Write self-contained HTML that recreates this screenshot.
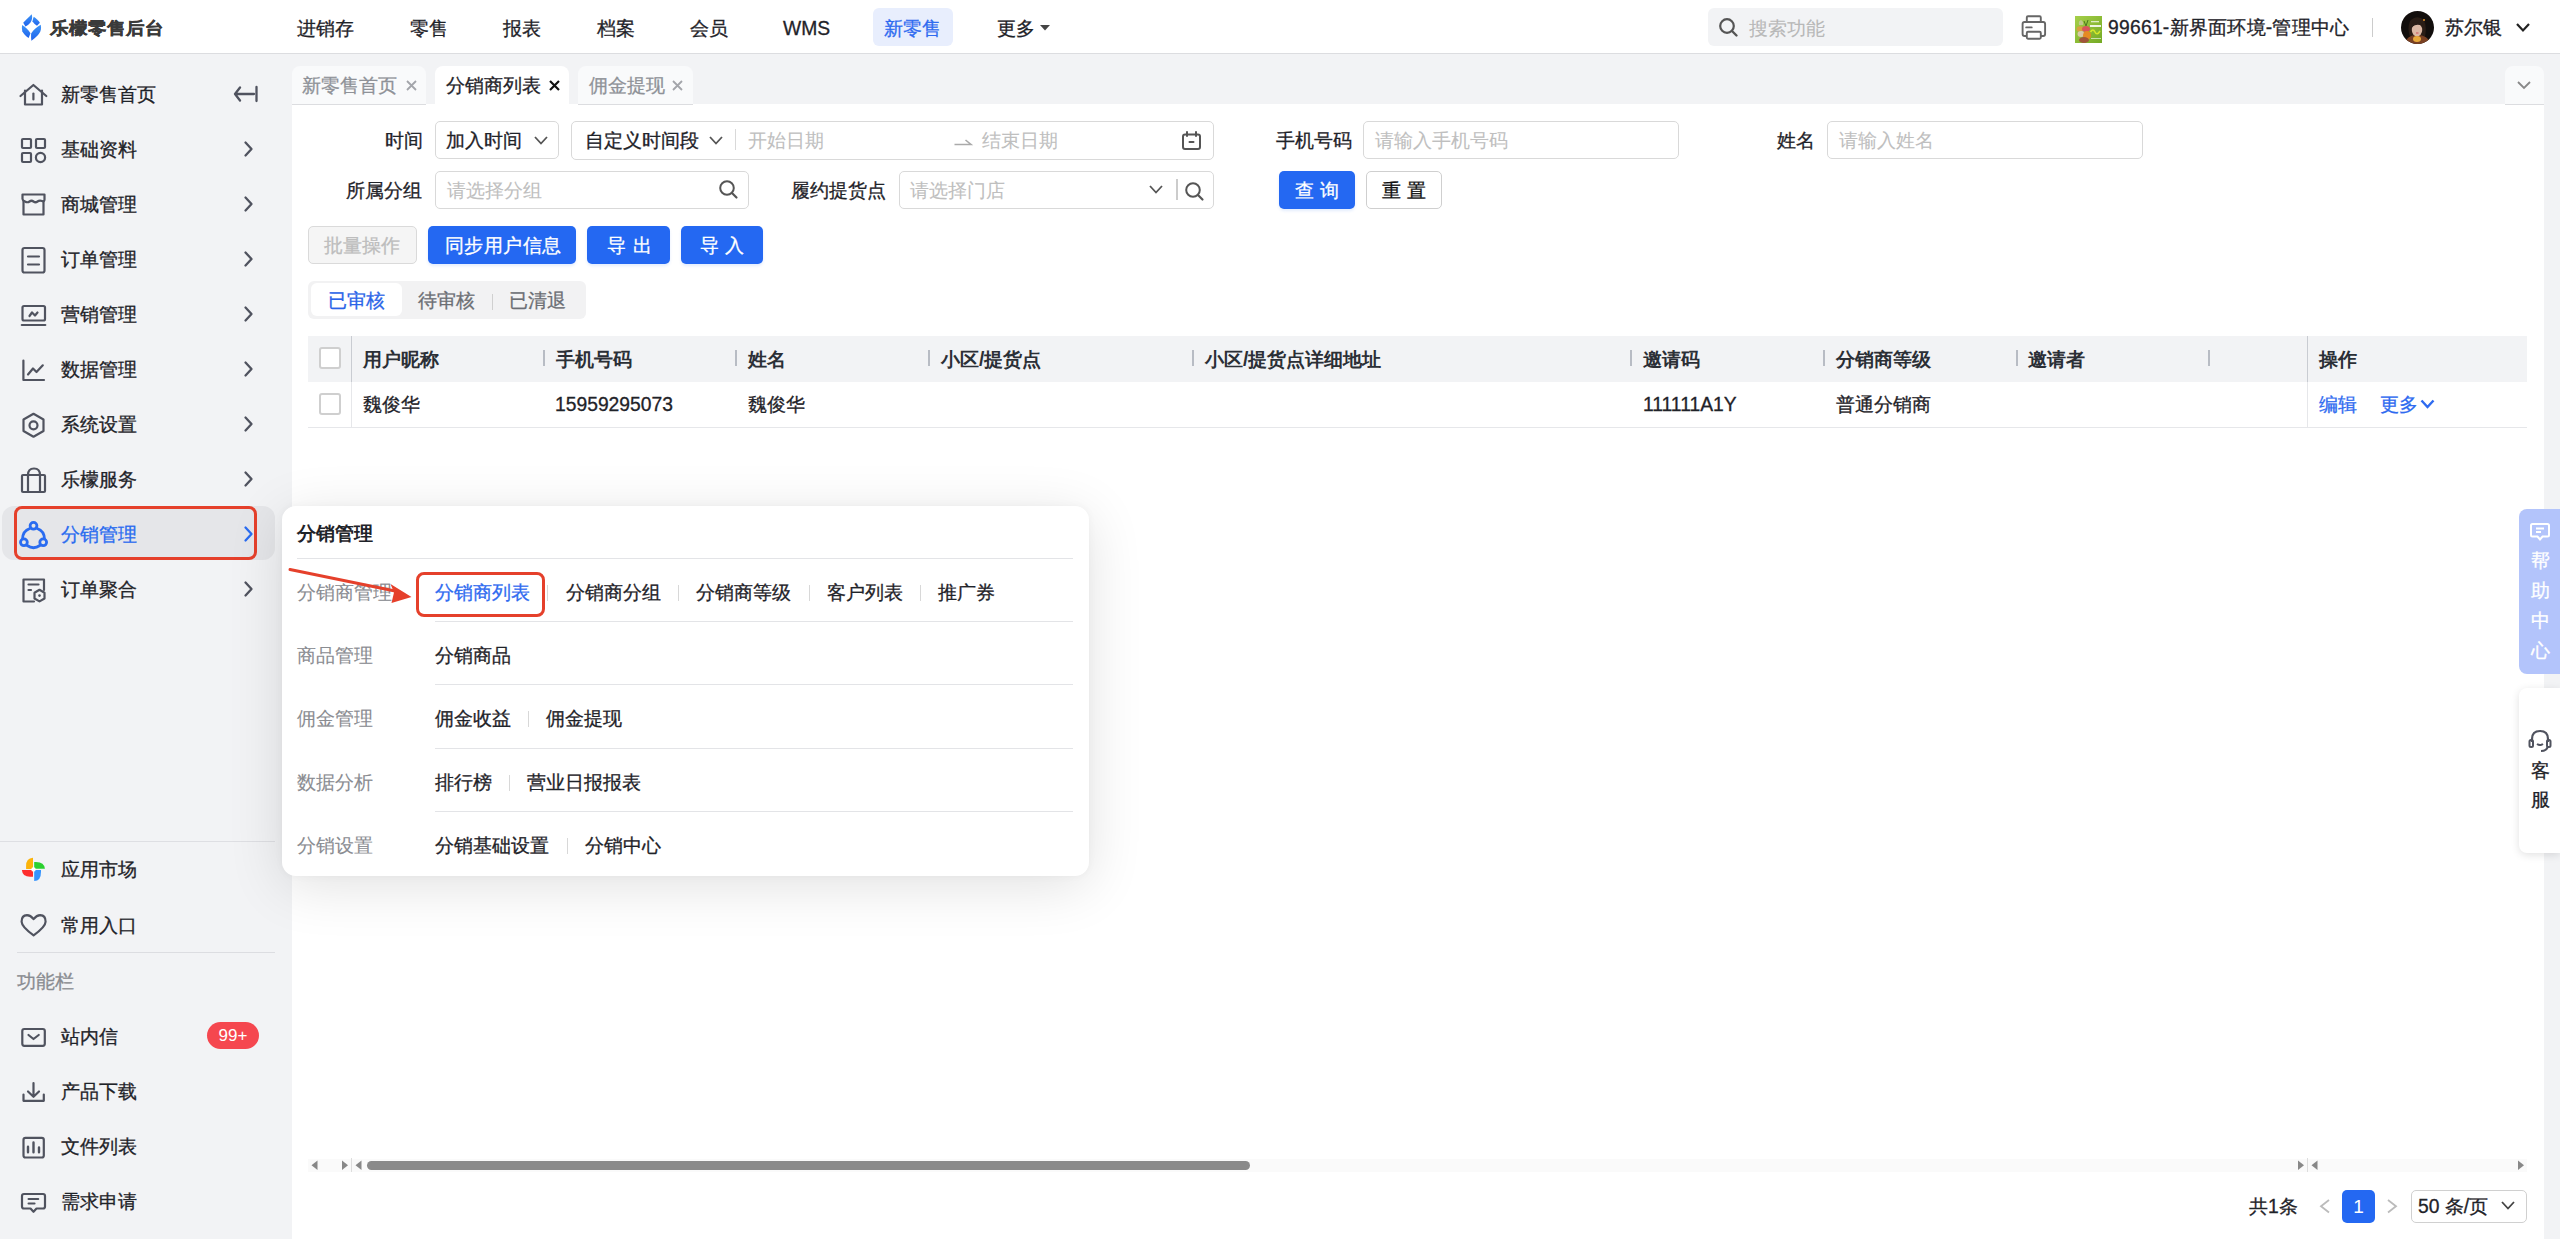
<!DOCTYPE html>
<html><head><meta charset="utf-8">
<style>
*{box-sizing:border-box;margin:0;padding:0}
html,body{width:2560px;height:1239px;overflow:hidden;background:#f2f3f5;font-family:"Liberation Sans",sans-serif;color:#1f2329}
.a{position:absolute}
.t{position:absolute;font-size:19.3px;line-height:30px;white-space:nowrap;-webkit-text-stroke-width:0.3px}
svg{position:absolute;overflow:visible}
#hdr{left:0;top:0;width:2560px;height:54px;background:#fff;border-bottom:1px solid #dcdde0}
#side{left:0;top:55px;width:292px;height:1184px;background:#f2f3f5}
#panel{left:292px;top:104px;width:2252px;height:1135px;background:#fff}
.ph{color:#bfbfbf;-webkit-text-stroke-width:0.1px}
.box{position:absolute;border:1px solid #d9d9d9;border-radius:5px;background:#fff}
.btnb{position:absolute;background:#2468f2;border-radius:5px;color:#fff;box-shadow:0 2px 3px rgba(36,104,242,0.12)}
.si{color:#1f2329}
.gray{color:#888;-webkit-text-stroke-width:0.1px}
</style></head><body>

<!-- HEADER -->
<div id="hdr" class="a">
  <svg style="left:15px;top:10px" width="35" height="35" viewBox="0 0 35 35">
    <defs><linearGradient id="lg" x1="0" y1="0" x2="0" y2="1"><stop offset="0" stop-color="#3d94f6"/><stop offset="1" stop-color="#1f63ed"/></linearGradient></defs>
    <path d="M16.7 4.2C17.6 7 17.2 10 15.5 12.5C14 14.5 12 15.8 10.5 16.4L8.2 12.7C10 10.5 14 7 16.7 4.2Z" fill="url(#lg)"/>
    <path d="M18.8 6.8C21 8.5 23.5 10.5 24.9 12.7L22 15.8C20 14.5 18.5 13 17.5 11.3C17.8 9.5 18.2 8 18.8 6.8Z" fill="url(#lg)"/>
    <path d="M7.1 15C10 17 13.5 19.5 15.5 23.2L13.6 28C10.5 26 8.5 23.5 7.3 21.2C6.8 19 6.8 17 7.1 15Z" fill="url(#lg)"/>
    <path d="M25.7 14.7C26.5 18 26 21 24 23.8C22 26.5 19 29 16.4 30.8C16 28 16 25.5 16.1 23.4C18.5 19.5 22 17 25.7 14.7Z" fill="url(#lg)"/>
  </svg>
  <div class="t" style="left:50px;top:13px;font-size:19px;font-weight:bold;color:#3a3a3a;letter-spacing:0px;-webkit-text-stroke-width:0.4px;transform:scaleY(0.92);transform-origin:0 50%">乐檬零售后台</div>

  <div class="t" style="left:297px;top:14px">进销存</div>
  <div class="t" style="left:410px;top:14px">零售</div>
  <div class="t" style="left:503px;top:14px">报表</div>
  <div class="t" style="left:597px;top:14px">档案</div>
  <div class="t" style="left:690px;top:14px">会员</div>
  <div class="t" style="left:783px;top:14px">WMS</div>
  <div class="a" style="left:873px;top:8px;width:80px;height:38px;background:#e8eefd;border-radius:6px"></div>
  <div class="t" style="left:884px;top:14px;color:#2f6bf0">新零售</div>
  <div class="t" style="left:997px;top:14px">更多</div>
  <svg style="left:1040px;top:25px" width="10" height="6" viewBox="0 0 10 6"><path d="M0 0H10L5 5.5Z" fill="#444"/></svg>

  <div class="a" style="left:1708px;top:8px;width:295px;height:38px;background:#f2f3f5;border-radius:6px"></div>
  <svg style="left:1719px;top:18px" width="19" height="19" viewBox="0 0 19 19"><circle cx="8" cy="8" r="6.8" fill="none" stroke="#555" stroke-width="2.2"/><path d="M13 13L17.5 17.5" stroke="#555" stroke-width="2.4" stroke-linecap="round"/></svg>
  <div class="t ph" style="left:1749px;top:14px;color:#b8b8b8">搜索功能</div>

  <svg style="left:2015px;top:10px" width="40" height="35" viewBox="0 0 40 35">
    <g fill="none" stroke="#666" stroke-width="1.9" stroke-linejoin="round">
    <path d="M11.8 12V7.5Q11.8 6.3 13 6.3H24.6Q25.8 6.3 25.8 7.5V12"/>
    <path d="M11.8 26H9.5Q7.6 26 7.6 24V14Q7.6 12 9.5 12H28.2Q30.1 12 30.1 14V24Q30.1 26 28.2 26H25.8"/>
    <path d="M13 21.8H24.6Q25.8 21.8 25.8 23V27.6Q25.8 28.8 24.6 28.8H13Q11.8 28.8 11.8 27.6V23Q11.8 21.8 13 21.8Z"/>
    <path d="M11.2 17.4H16.7" stroke-linecap="round"/>
    </g>
  </svg>
  <svg style="left:2075px;top:16px" width="27" height="27" viewBox="0 0 27 27">
    <defs><linearGradient id="sg" x1="0" y1="0" x2="1" y2="1"><stop offset="0" stop-color="#a6cf4a"/><stop offset="1" stop-color="#74aa24"/></linearGradient></defs>
    <rect width="27" height="27" fill="url(#sg)"/>
    <path d="M4 9Q3 5 6 4Q9 6 8 9Z" fill="#c9c9a0" opacity=".8"/>
    <path d="M9 5L11 10L13 4" fill="none" stroke="#4a7a20" stroke-width="1"/>
    <ellipse cx="5" cy="13" rx="3.5" ry="2.8" fill="#d9a040"/>
    <ellipse cx="11" cy="13" rx="4" ry="3" fill="#d8555a"/>
    <ellipse cx="6" cy="18" rx="3.5" ry="3" fill="#d8c9a8"/>
    <ellipse cx="12" cy="19.5" rx="4" ry="4.5" fill="#e58a22"/>
    <ellipse cx="9" cy="24" rx="5" ry="3" fill="#a0553a"/>
    <rect x="15" y="9" width="11" height="2" fill="#fff" opacity=".85"/>
    <rect x="16" y="5" width="8" height="1.3" fill="#fff" opacity=".7"/>
    <path d="M15.5 16Q18 12 20 16T25 15" fill="none" stroke="#d6e62a" stroke-width="1.6"/>
    <rect x="16" y="22" width="10" height="1" fill="#fff" opacity=".6"/>
  </svg>
  <div class="t" style="left:2108px;top:13px;color:#1f2329;letter-spacing:0.25px">99661-新界面环境-管理中心</div>
  <div class="a" style="left:2372px;top:18px;width:1px;height:19px;background:#ccc"></div>
  <svg style="left:2401px;top:11px" width="33" height="33" viewBox="0 0 33 33">
    <defs><clipPath id="avc"><circle cx="16.5" cy="16.5" r="16.5"/></clipPath></defs>
    <g clip-path="url(#avc)">
    <rect width="33" height="33" fill="#120e0c"/>
    <path d="M9 10Q16 3 23 9Q26 16 24 26L9 26Q6 17 9 10Z" fill="#2a1d16"/>
    <path d="M3 33Q6 24 16 24Q27 24 30 33Z" fill="#7a4022"/>
    <ellipse cx="16" cy="19" rx="5.2" ry="6.5" fill="#dcb8a4"/>
    <path d="M11 13Q16 9 22 13L21 15Q16 12 11 16Z" fill="#2a1d16"/>
    <ellipse cx="16" cy="28" rx="4" ry="3" fill="#e8a83a"/>
    <circle cx="23" cy="9" r="1" fill="#e0902a"/>
    <rect x="15" y="21.5" width="2.5" height="1" fill="#d0505a"/>
    </g>
  </svg>
  <div class="t" style="left:2445px;top:13px">苏尔银</div>
  <svg style="left:2516px;top:23px" width="14" height="9" viewBox="0 0 14 9"><path d="M1 1L7 7.5L13 1" fill="none" stroke="#222" stroke-width="2.2"/></svg>
</div>

<!-- SIDEBAR -->
<div id="side" class="a"></div>
<!-- sidebar items -->
<svg style="left:0;top:0" width="292" height="1239" viewBox="0 0 292 1239">
 <g fill="none" stroke="#50535f" stroke-width="2.2" stroke-linecap="round" stroke-linejoin="round">
  <!-- home -->
  <path d="M20.5 96L33.4 85L46.3 96"/>
  <path d="M25 90.5V104.5H42V90.5"/>
  <path d="M33.4 93.5V99.5"/>
  <!-- grid -->
  <rect x="22" y="139" width="9" height="9" rx="1"/>
  <rect x="36" y="139" width="9" height="9" rx="1"/>
  <rect x="22" y="153" width="9" height="9" rx="1"/>
  <circle cx="40.5" cy="157.5" r="4.6"/>
  <!-- store -->
  <path d="M23.5 201V214.5H43.5V201"/>
  <path d="M22.5 194.5H44.5V199.5Q44.5 202 42 201Q39.5 200 37.5 201.5Q35.5 203 33.5 201.5Q31.5 200 29.5 201.5Q27.5 203 25 201.5Q22.5 200.5 22.5 199Z"/>
  <!-- doc -->
  <rect x="22.5" y="248" width="22" height="24.5" rx="2"/>
  <path d="M28 256.5H39M28 264.5H39"/>
  <!-- monitor -->
  <rect x="22.5" y="306" width="22.5" height="14.5" rx="1.5"/>
  <path d="M21.8 325H45.3"/>
  <path d="M29.5 316L32 312.5L35 315.5L37.5 312.5" stroke-width="2.2"/>
  <!-- chart -->
  <path d="M23.4 360.5V380H44"/>
  <path d="M28 374.5L33 368.5L36.5 372L42.8 365.3"/>
  <!-- hex -->
  <path d="M33.5 413.8L43.5 419.5V431L33.5 436.7L23.5 431V419.5Z"/>
  <circle cx="33.5" cy="425.3" r="4"/>
  <!-- briefcase -->
  <rect x="22" y="475" width="23" height="17" rx="1"/>
  <path d="M28 475V492M40 475V492"/>
  <path d="M28 475Q28 468.5 34 468.5Q40 468.5 40 475"/>
 </g>
</svg>
<div class="a" style="left:2px;top:506px;width:273px;height:54px;background:#e5e6e9;border-radius:12px"></div>
<svg style="left:0;top:0" width="292" height="1239" viewBox="0 0 292 1239">
 <g fill="none" stroke="#50535f" stroke-width="2.2" stroke-linecap="round" stroke-linejoin="round">
  <!-- doc gear -->
  <path d="M34 601.5H23.5V579.5H44V590"/>
  <path d="M28.5 584.5H38.5M28.5 590H31"/>
  <path d="M39.5 589.8L44.5 592.7V598.5L39.5 601.4L34.5 598.5V592.7Z"/>
  <circle cx="39.5" cy="595.6" r="1.3" fill="#50535f" stroke="none"/>
 </g>
 <g fill="none" stroke="#2a6cf0" stroke-width="2.8" stroke-linecap="round">
  <path d="M29.8 528.5A11 11 0 0 0 22.6 538.6"/>
  <path d="M37.2 528.5A11 11 0 0 1 44.4 538.6"/>
  <path d="M27.2 545.5A11 11 0 0 0 39.8 545.5"/>
  <circle cx="33.5" cy="525.8" r="3.4"/>
  <circle cx="23.9" cy="542.3" r="3.4"/>
  <circle cx="43.2" cy="542.3" r="3.4"/>
 </g>
 <!-- chevrons -->
 <g fill="none" stroke="#50535f" stroke-width="2.3" stroke-linecap="round" stroke-linejoin="round">
  <path d="M240 87.5L235 94L240 100.5M236 94H254M256.5 87V101"/>
  <path d="M245.5 142.5L251.5 149L245.5 155.5"/>
  <path d="M245.5 197.5L251.5 204L245.5 210.5"/>
  <path d="M245.5 252.5L251.5 259L245.5 265.5"/>
  <path d="M245.5 307.5L251.5 314L245.5 320.5"/>
  <path d="M245.5 362.5L251.5 369L245.5 375.5"/>
  <path d="M245.5 417.5L251.5 424L245.5 430.5"/>
  <path d="M245.5 472.5L251.5 479L245.5 485.5"/>
  <path d="M245.5 582.5L251.5 589L245.5 595.5"/>
 </g>
 <path d="M245.5 527.5L251.5 534L245.5 540.5" fill="none" stroke="#2a6cf0" stroke-width="2.3" stroke-linecap="round" stroke-linejoin="round"/>
</svg>
<div class="t si" style="left:61px;top:80px">新零售首页</div>
<div class="t si" style="left:61px;top:135px">基础资料</div>
<div class="t si" style="left:61px;top:190px">商城管理</div>
<div class="t si" style="left:61px;top:245px">订单管理</div>
<div class="t si" style="left:61px;top:300px">营销管理</div>
<div class="t si" style="left:61px;top:355px">数据管理</div>
<div class="t si" style="left:61px;top:410px">系统设置</div>
<div class="t si" style="left:61px;top:465px">乐檬服务</div>
<div class="t" style="left:61px;top:520px;color:#2a6cf0">分销管理</div>
<div class="t si" style="left:61px;top:575px">订单聚合</div>
<div class="a" style="left:13.5px;top:506px;width:243px;height:54px;border:3.5px solid #e5402b;border-radius:8px"></div>

<!-- sidebar bottom -->
<div class="a" style="left:0;top:841px;width:275px;height:1px;background:#dedfe3"></div>
<svg style="left:0;top:840px" width="60" height="400" viewBox="0 840 60 400">
  <path d="M33 869V857.7Q26 858 26.1 866V869Z" fill="#fbb30a"/>
  <path d="M34.2 868.8H44.9Q44.5 862 36 861.9H34.2Z" fill="#2bd02f"/>
  <path d="M33 870H21.9Q22.5 876.8 30 876.8H33Z" fill="#fe2e2e"/>
  <path d="M34.2 870V881Q41 881 41 872V870Z" fill="#3593fd"/>
  <circle cx="33.5" cy="869.4" r="2.2" fill="#fff"/>
  <g fill="none" stroke="#50535f" stroke-width="2.2" stroke-linecap="round" stroke-linejoin="round">
  <path d="M33.6 919.2Q30.5 915.2 27 915.2Q21.5 915.5 21.6 921.8Q21.8 927 33.6 935.3Q45.4 927 45.6 921.8Q45.7 915.5 40.2 915.2Q36.7 915.2 33.6 919.2Z"/>
  <rect x="22.3" y="1029" width="22.5" height="16.8" rx="2"/>
  <path d="M28.5 1035L33.5 1039L38.7 1035"/>
  <path d="M33.5 1083V1096.5M28 1091.5L33.5 1096.8L39 1091.5"/>
  <path d="M23.5 1094.5V1100.8H43.8V1094.5"/>
  <rect x="23.5" y="1137.8" width="20.3" height="19.7" rx="2"/>
  <path d="M28 1146.8V1152.2M33.5 1142.5V1152.2M39 1147.5V1152.2" stroke-width="2.4"/>
  <path d="M24 1194H43Q45 1194 45 1196V1206.5Q45 1208.5 43 1208.5H36.5L33.5 1211.8L30.5 1208.5H24Q22 1208.5 22 1206.5V1196Q22 1194 24 1194Z"/>
  <path d="M28.6 1199H38.2M28.6 1203.5H34.5"/>
  </g>
</svg>
<div class="t si" style="left:61px;top:855px">应用市场</div>
<div class="t si" style="left:61px;top:911px">常用入口</div>
<div class="a" style="left:17px;top:952px;width:258px;height:1px;background:#dcdde1"></div>
<div class="t" style="left:17px;top:967px;color:#8a8c91">功能栏</div>
<div class="t si" style="left:61px;top:1022px">站内信</div>
<div class="a" style="left:207px;top:1022px;width:52px;height:27px;border-radius:14px;background:#f5474f;color:#fff;font-size:17px;line-height:27px;text-align:center">99+</div>
<div class="t si" style="left:61px;top:1077px">产品下载</div>
<div class="t si" style="left:61px;top:1132px">文件列表</div>
<div class="t si" style="left:61px;top:1187px">需求申请</div>


<!-- PANEL -->
<div id="panel" class="a"></div>
<!-- page tabs -->
<div class="a" style="left:292px;top:66px;width:134px;height:39px;background:#f9fafb;border-radius:8px 8px 0 0;border-bottom:1px solid #dcdde0"></div>
<div class="t" style="left:302px;top:71px;color:#8f9298">新零售首页</div>
<svg style="left:406px;top:80px" width="11" height="11" viewBox="0 0 11 11"><path d="M1 1L10 10M10 1L1 10" stroke="#a3a5aa" stroke-width="1.8"/></svg>
<div class="a" style="left:435px;top:66px;width:134px;height:40px;background:#fff;border-radius:8px 8px 0 0"></div>
<div class="t" style="left:446px;top:71px;color:#1f2329">分销商列表</div>
<svg style="left:549px;top:80px" width="11" height="11" viewBox="0 0 11 11"><path d="M1 1L10 10M10 1L1 10" stroke="#111" stroke-width="2.2"/></svg>
<div class="a" style="left:578px;top:66px;width:115px;height:39px;background:#f9fafb;border-radius:8px 8px 0 0;border-bottom:1px solid #dcdde0"></div>
<div class="t" style="left:589px;top:71px;color:#8f9298">佣金提现</div>
<svg style="left:672px;top:80px" width="11" height="11" viewBox="0 0 11 11"><path d="M1 1L10 10M10 1L1 10" stroke="#a3a5aa" stroke-width="1.8"/></svg>
<div class="a" style="left:2505px;top:66px;width:39px;height:39px;background:#f9fafb;border-radius:8px 8px 0 0;border-bottom:1px solid #dcdde0"></div>
<svg style="left:2517px;top:81px" width="14" height="8" viewBox="0 0 14 8"><path d="M1 1L7 7L13 1" fill="none" stroke="#888" stroke-width="1.8"/></svg>

<!-- filters row 1 -->
<div class="t" style="left:385px;top:126px">时间</div>
<div class="box" style="left:435px;top:121px;width:124px;height:38px"></div>
<div class="t" style="left:446px;top:126px">加入时间</div>
<svg style="left:534px;top:136px" width="14" height="9" viewBox="0 0 14 9"><path d="M1 1L7 7.5L13 1" fill="none" stroke="#555" stroke-width="1.8"/></svg>
<div class="box" style="left:571px;top:121px;width:643px;height:39px"></div>
<div class="t" style="left:585px;top:126px">自定义时间段</div>
<svg style="left:709px;top:136px" width="14" height="9" viewBox="0 0 14 9"><path d="M1 1L7 7.5L13 1" fill="none" stroke="#555" stroke-width="1.8"/></svg>
<div class="a" style="left:735px;top:129px;width:1px;height:21px;background:#d9d9d9"></div>
<div class="t ph" style="left:748px;top:126px">开始日期</div>
<svg style="left:954px;top:138px" width="18" height="8" viewBox="0 0 18 8"><path d="M0.5 6.5H17L11.5 2" fill="none" stroke="#aaa" stroke-width="1.6"/></svg>
<div class="t ph" style="left:982px;top:126px">结束日期</div>
<svg style="left:1182px;top:131px" width="19" height="19" viewBox="0 0 19 19"><rect x="1" y="3.5" width="17" height="14.5" rx="2" fill="none" stroke="#555" stroke-width="2"/><path d="M5 1V5M14 1V5M7.5 11H11.5" stroke="#555" stroke-width="2" stroke-linecap="round"/></svg>

<div class="t" style="left:1276px;top:126px">手机号码</div>
<div class="box" style="left:1363px;top:121px;width:316px;height:38px"></div>
<div class="t ph" style="left:1375px;top:126px">请输入手机号码</div>
<div class="t" style="left:1777px;top:126px">姓名</div>
<div class="box" style="left:1827px;top:121px;width:316px;height:38px"></div>
<div class="t ph" style="left:1839px;top:126px">请输入姓名</div>

<!-- filters row 2 -->
<div class="t" style="left:346px;top:176px">所属分组</div>
<div class="box" style="left:435px;top:171px;width:314px;height:38px"></div>
<div class="t ph" style="left:447px;top:176px">请选择分组</div>
<svg style="left:719px;top:180px" width="19" height="19" viewBox="0 0 19 19"><circle cx="8" cy="8" r="6.8" fill="none" stroke="#555" stroke-width="2"/><path d="M13 13L17.5 17.5" stroke="#555" stroke-width="2.2" stroke-linecap="round"/></svg>
<div class="t" style="left:791px;top:176px">履约提货点</div>
<div class="box" style="left:899px;top:171px;width:315px;height:38px"></div>
<div class="t ph" style="left:910px;top:176px">请选择门店</div>
<svg style="left:1149px;top:185px" width="14" height="9" viewBox="0 0 14 9"><path d="M1 1L7 7.5L13 1" fill="none" stroke="#555" stroke-width="1.8"/></svg>
<div class="a" style="left:1176px;top:179px;width:2px;height:21px;background:#ccc"></div>
<svg style="left:1185px;top:182px" width="19" height="19" viewBox="0 0 19 19"><circle cx="8" cy="8" r="6.8" fill="none" stroke="#555" stroke-width="2"/><path d="M13 13L17.5 17.5" stroke="#555" stroke-width="2.2" stroke-linecap="round"/></svg>
<div class="btnb" style="left:1279px;top:171px;width:76px;height:38px"></div>
<div class="t" style="left:1295px;top:176px;color:#fff;letter-spacing:6px;font-weight:500">查询</div>
<div class="box" style="left:1366px;top:171px;width:76px;height:38px;border-color:#cfcfcf"></div>
<div class="t" style="left:1382px;top:176px;letter-spacing:6px;color:#111">重置</div>

<!-- action buttons -->
<div class="box" style="left:308px;top:226px;width:109px;height:38px;background:#f5f5f5;border-color:#dadada"></div>
<div class="t" style="left:324px;top:231px;color:#bdbdbd">批量操作</div>
<div class="btnb" style="left:428px;top:226px;width:148px;height:38px"></div>
<div class="t" style="left:445px;top:231px;color:#fff;letter-spacing:0.4px">同步用户信息</div>
<div class="btnb" style="left:587px;top:226px;width:83px;height:38px"></div>
<div class="t" style="left:607px;top:231px;color:#fff;letter-spacing:7px">导出</div>
<div class="btnb" style="left:681px;top:226px;width:82px;height:38px"></div>
<div class="t" style="left:700px;top:231px;color:#fff;letter-spacing:6px">导入</div>

<!-- status segmented -->
<div class="a" style="left:308px;top:281px;width:278px;height:38px;background:#f2f2f3;border-radius:6px"></div>
<div class="a" style="left:311px;top:283px;width:91px;height:33px;background:#fff;border-radius:6px"></div>
<div class="t" style="left:328px;top:286px;color:#2a64e8">已审核</div>
<div class="t" style="left:418px;top:286px;color:#6b6e73">待审核</div>
<div class="a" style="left:492px;top:294px;width:1px;height:16px;background:#d0d0d0"></div>
<div class="t" style="left:509px;top:286px;color:#6b6e73">已清退</div>



<!-- TABLE -->
<div class="a" style="left:308px;top:336px;width:2219px;height:46px;background:#f2f3f5"></div>
<div class="a" style="left:308px;top:427px;width:2219px;height:1px;background:#e6e7ea"></div>
<div class="a" style="left:351px;top:336px;width:1px;height:46px;background:#c9ccd2"></div>
<div class="a" style="left:351px;top:382px;width:1px;height:45px;background:#e6e7ea"></div>
<div class="a" style="left:2307px;top:336px;width:1px;height:46px;background:#c9ccd2"></div>
<div class="a" style="left:2307px;top:382px;width:1px;height:45px;background:#e6e7ea"></div>
<div class="a" style="left:319px;top:347px;width:22px;height:22px;border:2px solid #cfcfcf;border-radius:3px;background:#fff"></div>
<div class="a" style="left:319px;top:393px;width:22px;height:22px;border:2px solid #cfcfcf;border-radius:3px;background:#fff"></div>
<div class="a" style="left:543px;top:350px;width:2px;height:16px;background:#b8bcc4"></div>
<div class="a" style="left:735px;top:350px;width:2px;height:16px;background:#b8bcc4"></div>
<div class="a" style="left:928px;top:350px;width:2px;height:16px;background:#b8bcc4"></div>
<div class="a" style="left:1192px;top:350px;width:2px;height:16px;background:#b8bcc4"></div>
<div class="a" style="left:1630px;top:350px;width:2px;height:16px;background:#b8bcc4"></div>
<div class="a" style="left:1823px;top:350px;width:2px;height:16px;background:#b8bcc4"></div>
<div class="a" style="left:2016px;top:350px;width:2px;height:16px;background:#b8bcc4"></div>
<div class="a" style="left:2208px;top:350px;width:2px;height:16px;background:#b8bcc4"></div>
<div class="t" style="left:363px;top:345px;font-weight:bold;color:#2b2f36;-webkit-text-stroke-width:0">用户昵称</div>
<div class="t" style="left:556px;top:345px;font-weight:bold;color:#2b2f36;-webkit-text-stroke-width:0">手机号码</div>
<div class="t" style="left:748px;top:345px;font-weight:bold;color:#2b2f36;-webkit-text-stroke-width:0">姓名</div>
<div class="t" style="left:941px;top:345px;font-weight:bold;color:#2b2f36;-webkit-text-stroke-width:0">小区/提货点</div>
<div class="t" style="left:1205px;top:345px;font-weight:bold;color:#2b2f36;-webkit-text-stroke-width:0">小区/提货点详细地址</div>
<div class="t" style="left:1643px;top:345px;font-weight:bold;color:#2b2f36;-webkit-text-stroke-width:0">邀请码</div>
<div class="t" style="left:1836px;top:345px;font-weight:bold;color:#2b2f36;-webkit-text-stroke-width:0">分销商等级</div>
<div class="t" style="left:2028px;top:345px;font-weight:bold;color:#2b2f36;-webkit-text-stroke-width:0">邀请者</div>
<div class="t" style="left:2319px;top:345px;font-weight:bold;color:#2b2f36;-webkit-text-stroke-width:0">操作</div>
<div class="t" style="left:363px;top:390px">魏俊华</div>
<div class="t" style="left:555px;top:390px">15959295073</div>
<div class="t" style="left:748px;top:390px">魏俊华</div>
<div class="t" style="left:1643px;top:390px">111111A1Y</div>
<div class="t" style="left:1836px;top:390px">普通分销商</div>
<div class="t" style="left:2319px;top:390px;color:#2f6bf0">编辑</div>
<div class="t" style="left:2380px;top:390px;color:#2f6bf0">更多</div>
<svg style="left:2420px;top:399px" width="15" height="10" viewBox="0 0 15 10"><path d="M1.5 1.5L7.5 8L13.5 1.5" fill="none" stroke="#2f6bf0" stroke-width="2.4"/></svg>

<!-- horizontal scrollbar -->
<div class="a" style="left:308px;top:1159px;width:2219px;height:13px;background:#fafafa"></div>
<svg style="left:0;top:0" width="2560" height="1239" viewBox="0 0 2560 1239">
  <path d="M317.5 1160.5V1170L311.5 1165.2Z" fill="#888"/>
  <path d="M342 1160.5V1170L348 1165.2Z" fill="#888"/>
  <path d="M361.5 1160.5V1170L355.5 1165.2Z" fill="#888"/>
  <path d="M2298 1160.5V1170L2304 1165.2Z" fill="#888"/>
  <path d="M2317.5 1160.5V1170L2311.5 1165.2Z" fill="#888"/>
  <path d="M2518 1160.5V1170L2524 1165.2Z" fill="#888"/>
  <rect x="351" y="1158" width="1" height="14" fill="#ddd"/>
  <rect x="2307" y="1158" width="1" height="14" fill="#ddd"/>
</svg>
<div class="a" style="left:367px;top:1161px;width:883px;height:9px;border-radius:5px;background:#8a8a8a"></div>

<!-- pagination -->
<div class="t" style="left:2249px;top:1192px">共1条</div>
<svg style="left:2319px;top:1199px" width="12" height="15" viewBox="0 0 12 15"><path d="M10 1L2 7.2L10 13.5" fill="none" stroke="#bbb" stroke-width="1.8"/></svg>
<div class="a" style="left:2342px;top:1190px;width:33px;height:33px;background:#2468f2;border-radius:5px;color:#fff;font-size:19px;line-height:33px;text-align:center">1</div>
<svg style="left:2386px;top:1199px" width="12" height="15" viewBox="0 0 12 15"><path d="M2 1L10 7.2L2 13.5" fill="none" stroke="#bbb" stroke-width="1.8"/></svg>
<div class="box" style="left:2411px;top:1190px;width:116px;height:33px;border-color:#d0d0d0"></div>
<div class="t" style="left:2418px;top:1192px">50 条/页</div>
<svg style="left:2501px;top:1201px" width="14" height="9" viewBox="0 0 14 9"><path d="M1 1L7 7.5L13 1" fill="none" stroke="#444" stroke-width="1.8"/></svg>

<!-- right floats -->
<div class="a" style="left:2544px;top:104px;width:16px;height:1135px;background:#f2f3f5"></div>

<div class="a" style="left:2519px;top:509px;width:41px;height:165px;background:#b3c4fb;border-radius:8px 0 0 8px"></div>
<svg style="left:2530px;top:523px" width="20" height="18" viewBox="0 0 20 18"><path d="M2.5 1H17.5Q19 1 19 2.5V12Q19 13.5 17.5 13.5H12.5L10 16.5L7.5 13.5H2.5Q1 13.5 1 12V2.5Q1 1 2.5 1Z" fill="none" stroke="#fff" stroke-width="2"/><path d="M6 5.5H14M6 9H11" stroke="#fff" stroke-width="2"/></svg>
<div class="t" style="left:2530px;top:546px;color:#fff;line-height:30px;width:20px;white-space:normal;text-align:center">帮<br>助<br>中<br>心</div>
<div class="a" style="left:2519px;top:688px;width:41px;height:165px;background:#fff;border-radius:8px 0 0 8px;box-shadow:0 2px 8px rgba(0,0,0,0.12)"></div>
<svg style="left:2528px;top:729px" width="24" height="24" viewBox="0 0 24 24"><path d="M4 13V10Q4 2 12 2Q20 2 20 10V13" fill="none" stroke="#50535f" stroke-width="2.2"/><rect x="1.5" y="11" width="3.5" height="7" rx="1.5" fill="none" stroke="#50535f" stroke-width="2"/><rect x="19" y="11" width="3.5" height="7" rx="1.5" fill="none" stroke="#50535f" stroke-width="2"/><path d="M9 15Q12 17 15 15" fill="none" stroke="#50535f" stroke-width="2"/><path d="M20 17Q19 22 13 22" fill="none" stroke="#50535f" stroke-width="2"/></svg>
<div class="t" style="left:2530px;top:756px;color:#1f2329;line-height:29px;width:20px;white-space:normal;text-align:center">客<br>服</div>

<!-- POPUP -->
<div class="a" style="left:282px;top:506px;width:807px;height:370px;background:#fff;border-radius:14px;box-shadow:0 10px 56px rgba(0,0,0,0.12),0 0 8px rgba(0,0,0,0.04)"></div>
<div class="t" style="left:297px;top:519px;font-weight:bold;color:#1f2329;-webkit-text-stroke-width:0">分销管理</div>
<div class="a" style="left:297px;top:558px;width:776px;height:1px;background:#e3e4e7"></div>
<div class="t gray" style="left:297px;top:578px;color:#8a8c91">分销商管理</div>
<div class="t" style="left:435px;top:578px;color:#2f6bf0">分销商列表</div>
<div class="a" style="left:547px;top:585px;width:1px;height:16px;background:#d8d8d8"></div>
<div class="t" style="left:566px;top:578px">分销商分组</div>
<div class="a" style="left:678px;top:585px;width:1px;height:16px;background:#d8d8d8"></div>
<div class="t" style="left:696px;top:578px">分销商等级</div>
<div class="a" style="left:809px;top:585px;width:1px;height:16px;background:#d8d8d8"></div>
<div class="t" style="left:827px;top:578px">客户列表</div>
<div class="a" style="left:920px;top:585px;width:1px;height:16px;background:#d8d8d8"></div>
<div class="t" style="left:938px;top:578px">推广券</div>
<div class="a" style="left:435px;top:621px;width:638px;height:1px;background:#e3e4e7"></div>
<div class="t gray" style="left:297px;top:641px;color:#8a8c91">商品管理</div>
<div class="t" style="left:435px;top:641px">分销商品</div>
<div class="a" style="left:435px;top:684px;width:638px;height:1px;background:#e3e4e7"></div>
<div class="t gray" style="left:297px;top:704px;color:#8a8c91">佣金管理</div>
<div class="t" style="left:435px;top:704px">佣金收益</div>
<div class="a" style="left:528px;top:711px;width:1px;height:16px;background:#d8d8d8"></div>
<div class="t" style="left:546px;top:704px">佣金提现</div>
<div class="a" style="left:435px;top:748px;width:638px;height:1px;background:#e3e4e7"></div>
<div class="t gray" style="left:297px;top:768px;color:#8a8c91">数据分析</div>
<div class="t" style="left:435px;top:768px">排行榜</div>
<div class="a" style="left:509px;top:775px;width:1px;height:16px;background:#d8d8d8"></div>
<div class="t" style="left:527px;top:768px">营业日报报表</div>
<div class="a" style="left:435px;top:811px;width:638px;height:1px;background:#e3e4e7"></div>
<div class="t gray" style="left:297px;top:831px;color:#8a8c91">分销设置</div>
<div class="t" style="left:435px;top:831px">分销基础设置</div>
<div class="a" style="left:567px;top:838px;width:1px;height:16px;background:#d8d8d8"></div>
<div class="t" style="left:585px;top:831px">分销中心</div>
<div class="a" style="left:416px;top:572px;width:129px;height:45px;border:3.5px solid #e5402b;border-radius:8px"></div>
<svg style="left:0;top:0" width="2560" height="1239" viewBox="0 0 2560 1239">
  <path d="M290 569.5L395 591" stroke="#e5402b" stroke-width="3" stroke-linecap="round"/>
  <path d="M411.5 597L390.5 584L394 592.5L391.5 603Z" fill="#e5402b"/>
</svg>

</body></html>
